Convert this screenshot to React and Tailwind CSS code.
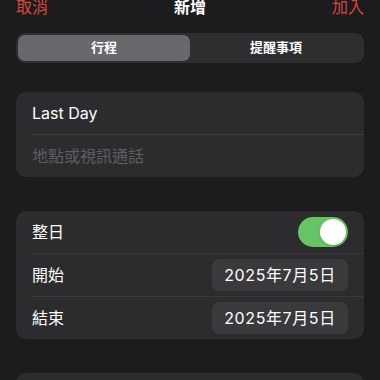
import React, { useState } from 'react';

const font = { fontFamily: 'Inter, "Noto Sans CJK TC", "Liberation Sans", sans-serif' };

function Toggle({ on, onChange }) {
  return (
    <button
      onClick={() => onChange(!on)}
      className={`w-[50px] h-[30px] rounded-full p-[2px] flex items-center ${on ? 'bg-[#65c466] justify-end' : 'bg-[#39393d] justify-start'}`}
    >
      <span className="block w-[26px] h-[26px] rounded-full bg-white shadow" />
    </button>
  );
}

function DatePill({ children }) {
  return (
    <div className="w-[136px] h-[32px] rounded-[7px] bg-[#3a3a3c] flex items-center justify-center text-[16px] text-white tracking-[0.6px]">
      {children}
    </div>
  );
}

export default function App() {
  const [tab, setTab] = useState(0);
  const [allDay, setAllDay] = useState(true);

  return (
    <div className="w-[380px] h-[380px] overflow-hidden bg-[#1c1c1e] px-4 text-white" style={font}>
      {/* Header */}
      <div className="flex items-center justify-between h-[13px] text-[16px]">
        <span className="text-[#d8453b]">取消</span>
        <span className="font-semibold">新增</span>
        <span className="text-[#d8453b]">加入</span>
      </div>

      {/* Segmented control */}
      <div className="mt-[20px] h-[30px] rounded-[9px] bg-[#2e2e31] p-[2px] grid grid-cols-2 text-[13px] font-semibold">
        {['行程', '提醒事項'].map((label, i) => (
          <button
            key={label}
            onClick={() => setTab(i)}
            className={`rounded-[7px] flex items-center justify-center ${tab === i ? 'bg-[#68686c]' : ''}`}
          >
            {label}
          </button>
        ))}
      </div>

      {/* Title / location */}
      <div className="mt-[29px] rounded-[10px] bg-[#2c2c2e] text-[16px]">
        <div className="h-[42px] flex items-center pl-4">Last Day</div>
        <div className="ml-4 border-t border-[#3a3a3c]" />
        <div className="h-[42px] flex items-center pl-4 text-[#5d5d61]">地點或視訊通話</div>
      </div>

      {/* Dates */}
      <div className="mt-[34px] rounded-[10px] bg-[#2c2c2e] text-[16px]">
        <div className="h-[42px] flex items-center justify-between pl-4 pr-4">
          <span>整日</span>
          <Toggle on={allDay} onChange={setAllDay} />
        </div>
        <div className="ml-4 border-t border-[#38383a]" />
        <div className="h-[42px] flex items-center justify-between pl-4 pr-4">
          <span>開始</span>
          <DatePill>2025年7月5日</DatePill>
        </div>
        <div className="ml-4 border-t border-[#38383a]" />
        <div className="h-[42px] flex items-center justify-between pl-4 pr-4">
          <span>結束</span>
          <DatePill>2025年7月5日</DatePill>
        </div>
      </div>

      <div className="mt-[34px] h-[80px] rounded-[10px] bg-[#2c2c2e]" />
    </div>
  );
}
